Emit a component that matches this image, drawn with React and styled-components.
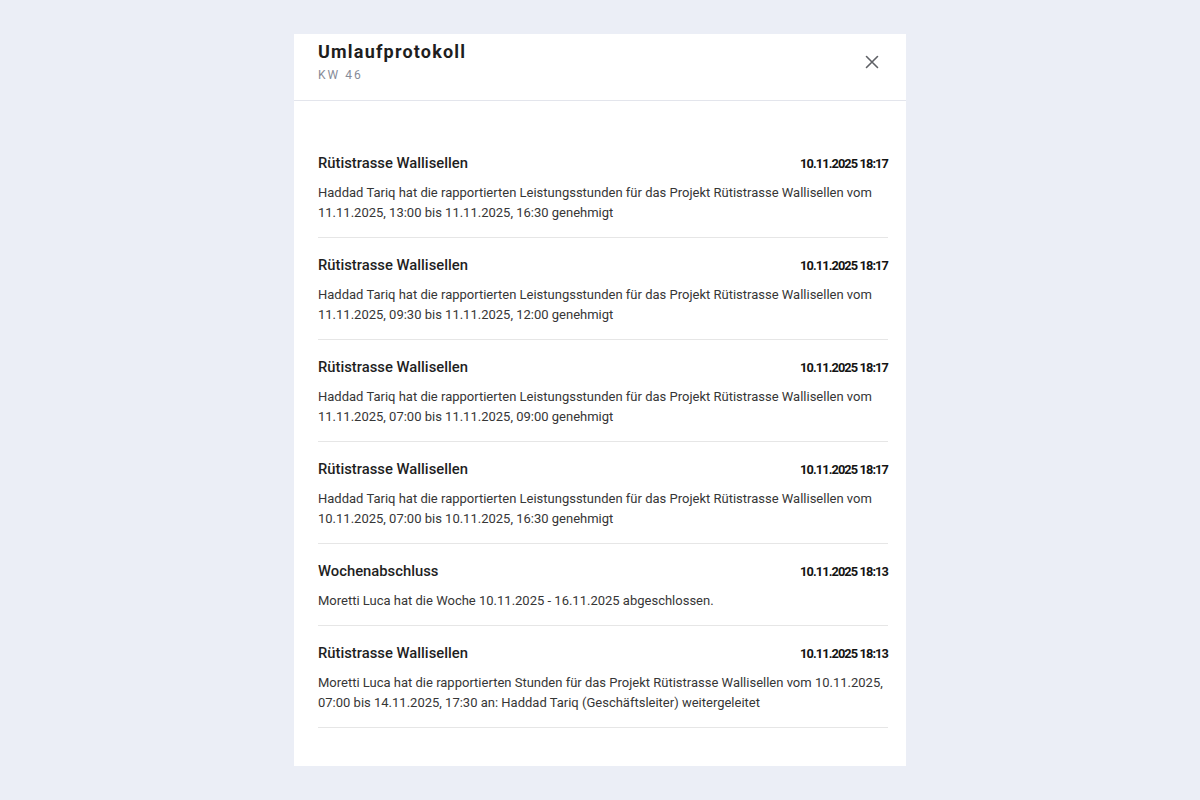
import React from 'react';
import styled, { createGlobalStyle } from 'styled-components';

const GlobalStyle = createGlobalStyle`
  html, body {
    margin: 0;
    padding: 0;
    background: #ebeef6;
    font-family: Roboto, "Liberation Sans", sans-serif;
  }
`;

const Page = styled.div`
  display: flex;
  justify-content: center;
  min-height: 800px;
  padding-top: 34px;
  box-sizing: border-box;
`;

const Modal = styled.div`
  width: 612px;
  height: 732px;
  background: #ffffff;
  display: flex;
  flex-direction: column;
`;

const Header = styled.div`
  display: flex;
  justify-content: space-between;
  align-items: flex-start;
  padding: 7px 24px 0 24px;
  height: 59px;
  border-bottom: 1px solid #e3e5ec;
`;

const Title = styled.h2`
  margin: 0;
  font-size: 18px;
  font-weight: 700;
  color: #1e1e1e;
  line-height: 22px;
  letter-spacing: 1.2px;
`;

const Sub = styled.div`
  margin-top: 5px;
  font-size: 12px;
  color: #878b98;
  letter-spacing: 2px;
`;

const CloseButton = styled.button`
  border: none;
  background: none;
  padding: 0;
  margin-top: 11px;
  width: 20px;
  height: 20px;
  cursor: pointer;
  display: flex;
  align-items: center;
  justify-content: center;
`;

const List = styled.div`
  padding: 35px 18px 0 24px;
  display: flex;
  flex-direction: column;
`;

const Item = styled.div`
  padding: 17px 0 14px;
  border-bottom: 1px solid #e6e6e6;
`;

const Row = styled.div`
  display: flex;
  justify-content: space-between;
  align-items: center;
  height: 20px;
`;

const ItemTitle = styled.div`
  font-size: 14.8px;
  font-weight: 500;
  color: #1f1f1f;
`;

const Stamp = styled.div`
  font-size: 12.8px;
  font-weight: 700;
  color: #141414;
  letter-spacing: -0.9px;
`;

const Body = styled.p`
  margin: 10px 0 0;
  font-size: 13px;
  line-height: 20px;
  color: #363636;
`;

const entries = [
  {
    title: 'Rütistrasse Wallisellen',
    stamp: '10.11.2025 18:17',
    text: 'Haddad Tariq hat die rapportierten Leistungsstunden für das Projekt Rütistrasse Wallisellen vom 11.11.2025, 13:00 bis 11.11.2025, 16:30 genehmigt',
  },
  {
    title: 'Rütistrasse Wallisellen',
    stamp: '10.11.2025 18:17',
    text: 'Haddad Tariq hat die rapportierten Leistungsstunden für das Projekt Rütistrasse Wallisellen vom 11.11.2025, 09:30 bis 11.11.2025, 12:00 genehmigt',
  },
  {
    title: 'Rütistrasse Wallisellen',
    stamp: '10.11.2025 18:17',
    text: 'Haddad Tariq hat die rapportierten Leistungsstunden für das Projekt Rütistrasse Wallisellen vom 11.11.2025, 07:00 bis 11.11.2025, 09:00 genehmigt',
  },
  {
    title: 'Rütistrasse Wallisellen',
    stamp: '10.11.2025 18:17',
    text: 'Haddad Tariq hat die rapportierten Leistungsstunden für das Projekt Rütistrasse Wallisellen vom 10.11.2025, 07:00 bis 10.11.2025, 16:30 genehmigt',
  },
  {
    title: 'Wochenabschluss',
    stamp: '10.11.2025 18:13',
    text: 'Moretti Luca hat die Woche 10.11.2025 - 16.11.2025 abgeschlossen.',
  },
  {
    title: 'Rütistrasse Wallisellen',
    stamp: '10.11.2025 18:13',
    text: 'Moretti Luca hat die rapportierten Stunden für das Projekt Rütistrasse Wallisellen vom 10.11.2025, 07:00 bis 14.11.2025, 17:30 an: Haddad Tariq (Geschäftsleiter) weitergeleitet',
  },
];

function App() {
  return (
    <>
      <GlobalStyle />
      <Page>
        <Modal>
          <Header>
            <div>
              <Title>Umlaufprotokoll</Title>
              <Sub>KW 46</Sub>
            </div>
            <CloseButton aria-label="Schliessen">
              <svg width="16" height="16" viewBox="0 0 16 16">
                <path d="M2.5 2.5L13.5 13.5M13.5 2.5L2.5 13.5" stroke="#5f6166" strokeWidth="1.6" strokeLinecap="round" />
              </svg>
            </CloseButton>
          </Header>
          <List>
            {entries.map((e, i) => (
              <Item key={i}>
                <Row>
                  <ItemTitle>{e.title}</ItemTitle>
                  <Stamp>{e.stamp}</Stamp>
                </Row>
                <Body>{e.text}</Body>
              </Item>
            ))}
          </List>
        </Modal>
      </Page>
    </>
  );
}

export default App;
